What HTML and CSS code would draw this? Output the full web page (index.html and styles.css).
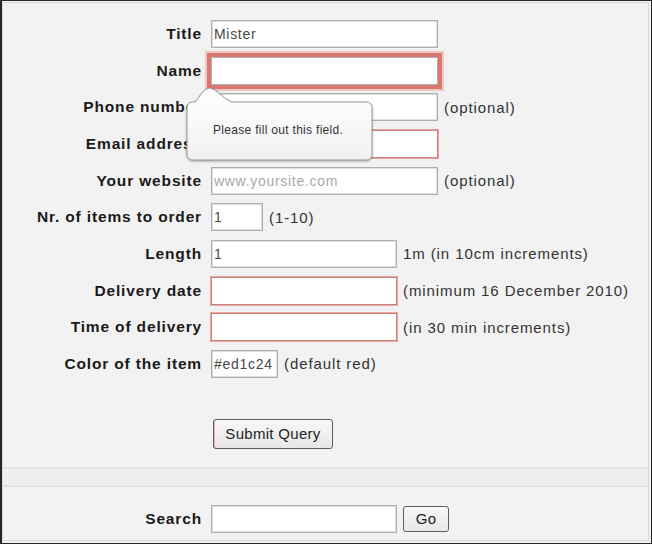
FILE: index.html
```html
<!DOCTYPE html>
<html>
<head>
<meta charset="utf-8">
<link rel="stylesheet" href="styles.css">
</head>
<body>
<div class="frame">
  <div class="page">
    <form class="form">
      <label class="lbl">Title</label>
      <div class="field"><input class="txt w-lg" type="text" value="Mister"></div>

      <label class="lbl">Name</label>
      <div class="field"><input class="txt w-lg focus" type="text" value=""></div>

      <label class="lbl">Phone number</label>
      <div class="field"><input class="txt w-lg" type="text" value=""><span class="note">(optional)</span></div>

      <label class="lbl">Email address</label>
      <div class="field"><input class="txt w-lg invalid" type="text" value=""></div>

      <label class="lbl">Your website</label>
      <div class="field"><input class="txt w-lg" type="text" placeholder="www.yoursite.com"><span class="note">(optional)</span></div>

      <label class="lbl">Nr. of items to order</label>
      <div class="field"><input class="txt w-sm" type="text" value="1"><span class="note">(1-10)</span></div>

      <label class="lbl">Length</label>
      <div class="field"><input class="txt w-md" type="text" value="1"><span class="note">1m (in 10cm increments)</span></div>

      <label class="lbl">Delivery date</label>
      <div class="field"><input class="txt w-md invalid" type="text" value=""><span class="note">(minimum 16 December 2010)</span></div>

      <label class="lbl">Time of delivery</label>
      <div class="field"><input class="txt w-md invalid" type="text" value=""><span class="note">(in 30 min increments)</span></div>

      <label class="lbl">Color of the item</label>
      <div class="field"><input class="txt w-color" type="text" value="#ed1c24"><span class="note">(default red)</span></div>

      <span class="lbl"></span>
      <div class="field actions"><button class="btn submit" type="button">Submit Query</button></div>
    </form>

    <div class="separator"></div>

    <div class="form search">
      <label class="lbl">Search</label>
      <div class="field"><input class="txt w-md" type="text" value=""><button class="btn go" type="button">Go</button></div>
    </div>

    <div class="tooltip">
      <svg class="bubble" width="192" height="78" viewBox="0 0 192 78">
        <defs>
          <linearGradient id="bg" x1="0" y1="0" x2="0" y2="1">
            <stop offset="0" stop-color="#ffffff"/>
            <stop offset="1" stop-color="#f1f1f1"/>
          </linearGradient>
        </defs>
        <path d="M3,22 Q3,16 9,16 L11,16 Q14,13 17,8 Q21,2 26,2 Q30,3 36,8 Q42,14 48,16 L182,16 Q188,16 188,22 L188,68 Q188,74 182,74 L9,74 Q3,74 3,68 Z" fill="url(#bg)" stroke="#9a9a9a" stroke-width="1"/>
      </svg>
      <span class="tip-text">Please fill out this field.</span>
    </div>
  </div>
</div>
</body>
</html>
```

FILE: styles.css
```css
html, body {
  margin: 0;
  padding: 0;
  background: #f2f2f2;
}

.frame {
  width: 652px;
  height: 544px;
  box-sizing: border-box;
  border: 1px solid #262626;
  border-left-width: 2px;
  padding: 1px 2px 2px 0;
  background: #f2f2f2;
}

.page {
  position: relative;
  height: 100%;
  box-sizing: border-box;
  border: 1px solid #d9d9d9;
  padding-top: 17px;
  font-family: "Liberation Sans", Arial, sans-serif;
}

.form {
  display: grid;
  grid-template-columns: 199px auto;
  column-gap: 9px;
  row-gap: 8.67px;
  align-items: center;
}

.lbl {
  text-align: right;
  font-weight: bold;
  font-size: 15.5px;
  letter-spacing: 0.85px;
  color: #1a1a1a;
  white-space: nowrap;
}

.field {
  display: flex;
  align-items: center;
  gap: 6px;
  height: 28px;
}

.txt {
  box-sizing: border-box;
  height: 28px;
  margin: 0;
  padding: 0 2px;
  border: 1px solid #abaeb2;
  box-shadow: inset 0 0 0 1px #dcdee1;
  background: #ffffff;
  font-family: "Liberation Sans", Arial, sans-serif;
  font-size: 14px;
  letter-spacing: 0.7px;
  color: #484848;
  outline: none;
}

.txt::placeholder {
  color: #a8a8a8;
}

.w-lg { width: 227px; }
.w-md { width: 186px; }
.w-sm { width: 52px; }
.w-color { width: 67px; }

.focus {
  box-shadow: 0 0 0 4px #da7870, 0 0 1px 6px rgba(236, 160, 150, 0.5);
}

.invalid {
  border-color: #c6837e;
  box-shadow: 0 0 0 1px #eba39c;
}

.note {
  font-size: 15px;
  letter-spacing: 0.9px;
  color: #333;
  white-space: nowrap;
}

.actions {
  margin-top: 32px;
  height: 30px;
}

.btn {
  box-sizing: border-box;
  margin: 0;
  border: 1px solid #5e5e5e;
  border-radius: 3px;
  background: linear-gradient(#f7f7f7, #e8e8e8);
  font-family: "Liberation Sans", Arial, sans-serif;
  font-size: 15px;
  letter-spacing: 0.3px;
  color: #222;
  padding: 0;
}

.submit {
  width: 120px;
  height: 30px;
  margin-left: 2px;
  box-shadow: inset 1px 0 0 #e8b0ad;
}

.go {
  width: 46px;
  height: 26px;
}

.separator {
  margin-top: 18px;
  height: 16px;
  border-top: 2px solid #e2e2e2;
  border-bottom: 2px solid #e2e2e2;
  background: #efefef;
}

.search {
  margin-top: 18px;
}

.tooltip {
  position: absolute;
  left: 181px;
  top: 83px;
  width: 192px;
  height: 78px;
}

.bubble {
  position: absolute;
  left: 0;
  top: 0;
  filter: drop-shadow(0 1px 1px rgba(0, 0, 0, 0.3));
}

.tip-text {
  position: relative;
  display: block;
  padding: 37px 0 0 29px;
  font-family: "Liberation Sans", Arial, sans-serif;
  font-size: 12px;
  line-height: 14px;
  letter-spacing: 0.3px;
  color: #333;
  white-space: nowrap;
}
```
